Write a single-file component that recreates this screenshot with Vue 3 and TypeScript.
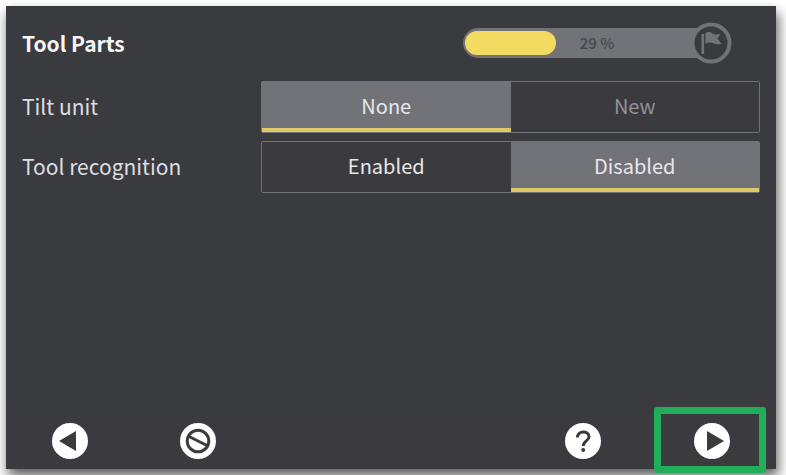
<script setup lang="ts">
import { ref } from 'vue'

interface Option {
  label: string
  disabled?: boolean
}
interface Setting {
  label: string
  options: Option[]
  selected: string
}

const progress = ref(29)
const settings = ref<Setting[]>([
  { label: 'Tilt unit', options: [{ label: 'None' }, { label: 'New', disabled: true }], selected: 'None' },
  { label: 'Tool recognition', options: [{ label: 'Enabled' }, { label: 'Disabled' }], selected: 'Disabled' },
])
</script>

<template>
  <div class="page">
    <main class="panel">
      <header class="header">
        <h1 class="title">Tool Parts</h1>
        <div class="progress">
          <div class="track" role="progressbar" aria-label="Setup progress" :aria-valuenow="progress" aria-valuemin="0" aria-valuemax="100">
            <div class="rail">
              <div class="fill" :style="{ width: (progress + 9) + '%' }"></div>
              <span class="percent">{{ progress }} %</span>
            </div>
          </div>
          <svg class="flag" viewBox="0 0 42 42" aria-hidden="true">
            <circle cx="21" cy="21" r="18.5" fill="#3a3b3e" stroke="#727279" stroke-width="4" />
            <path d="M11.500 12h2.600v20h-2.600z" fill="#727279" />
            <path d="M15.500 11q4-2 7 .5 2 1.500 8 .5l-3 4.500 4 5.500q-5 1-8-.8-3.500-1.700-8 .3z" fill="#727279" />
          </svg>
        </div>
      </header>

      <section class="settings">
        <div v-for="(s, i) in settings" :key="s.label" class="row">
          <span :id="'setting-' + i" class="label">{{ s.label }}</span>
          <div class="segment" role="group" :aria-labelledby="'setting-' + i">
            <button
              v-for="o in s.options"
              :key="o.label"
              type="button"
              class="option"
              :class="{ active: s.selected === o.label }"
              :aria-pressed="s.selected === o.label"
              :disabled="o.disabled"
              @click="s.selected = o.label"
            >{{ o.label }}</button>
          </div>
        </div>
      </section>

      <footer class="footer">
        <button type="button" class="nav back" aria-label="Back">
          <svg viewBox="0 0 36 36"><circle cx="18" cy="18" r="18" fill="#fff" /><path d="M24 8v20L7 18z" fill="#3b3a3e" /></svg>
        </button>
        <button type="button" class="nav cancel" aria-label="Cancel">
          <svg viewBox="0 0 36 36">
            <circle cx="18" cy="18" r="18" fill="#fff" />
            <circle cx="18" cy="18" r="10.800" fill="none" stroke="#3b3a3e" stroke-width="3" />
            <path d="M9 13.500l18 9" stroke="#3b3a3e" stroke-width="3" />
          </svg>
        </button>
        <button type="button" class="nav help" aria-label="Help">
          <svg viewBox="0 0 36 36">
            <circle cx="18" cy="18" r="18" fill="#fff" />
            <path d="M12.500 14.500c0-7.500 11.500-7 11.500-.8 0 4.300-5.700 4.300-5.700 9.300" fill="none" stroke="#3b3a3e" stroke-width="3" />
            <circle cx="18.200" cy="27" r="2" fill="#3b3a3e" />
          </svg>
        </button>
        <button type="button" class="nav next" aria-label="Next">
          <svg viewBox="0 0 36 36"><circle cx="18" cy="18" r="18" fill="#fff" /><path d="M13 8v20l17-10z" fill="#3b3a3e" /></svg>
        </button>
      </footer>
    </main>
  </div>
</template>

<style>
body {
  background: #fff;
}
</style>

<style scoped>
.page {
  box-sizing: border-box;
  display: flex;
  min-height: 100vh;
  padding: 6px 10px 6px 6px;
  overflow: hidden;
  font-family: "Noto Sans CJK SC", "Noto Sans", sans-serif;
}
.panel {
  flex: 1;
  display: flex;
  flex-direction: column;
  background: #3a3b3e;
  box-shadow: 2px 7px 12px rgba(0, 0, 0, 0.65);
}
.header {
  display: flex;
  align-items: center;
  justify-content: space-between;
  height: 73px;
  padding: 0 44px 0 16px;
}
.title {
  margin: 0;
  font-size: 21px;
  line-height: 28px;
  font-weight: 700;
  color: #f6f6f7;
}
.progress {
  display: flex;
  align-items: center;
}
.track {
  width: 243px;
  box-sizing: border-box;
  height: 30px;
  padding: 3px 2px;
  border-radius: 15px 0 0 15px;
  background: #727279;
}
.rail {
  display: flex;
  align-items: center;
  gap: 24px;
  height: 24px;
}
.fill {
  height: 24px;
  border-radius: 12px;
  background: #f3da60;
}
.percent {
  font-size: 15px;
  line-height: 24px;
  font-weight: 500;
  color: #46464b;
}
.flag {
  width: 42px;
  height: 42px;
  margin-left: -16px;
}
.settings {
  flex: 1;
  display: flex;
  flex-direction: column;
  gap: 8px;
  padding: 2px 16px 0;
}
.row {
  display: grid;
  grid-template-columns: 239px 1fr;
  align-items: center;
}
.label {
  padding-bottom: 2px;
  font-size: 21px;
  line-height: 32px;
  color: #dedee0;
}
.segment {
  display: grid;
  grid-template-columns: 1fr 1fr;
  box-sizing: border-box;
  height: 52px;
  border: 1px solid #727279;
  border-radius: 2px;
}
.option {
  padding: 0;
  border: 0;
  border-top: 2px solid transparent;
  border-bottom: 4px solid transparent;
  background: #3b3a3e;
  font: inherit;
  font-size: 20px;
  line-height: 32px;
  color: #e8e8ea;
}
.option.active {
  background: #727279;
  border-bottom-color: #dfc967;
}
.option:disabled {
  color: #929297;
}
.footer {
  display: grid;
  grid-template-columns: repeat(6, 1fr);
  align-items: center;
  justify-items: center;
  height: 57px;
  background: #3b3a3e;
}
.nav {
  position: relative;
  width: 36px;
  height: 36px;
  padding: 0;
  border: 0;
  background: none;
}
.nav svg {
  display: block;
  width: 36px;
  height: 36px;
}
.help {
  grid-column: 5;
}
.next::after {
  content: "";
  position: absolute;
  inset: -16px -36px -14px -40px;
  border: 7px solid #20ae5b;
  border-radius: 3px;
}
</style>
